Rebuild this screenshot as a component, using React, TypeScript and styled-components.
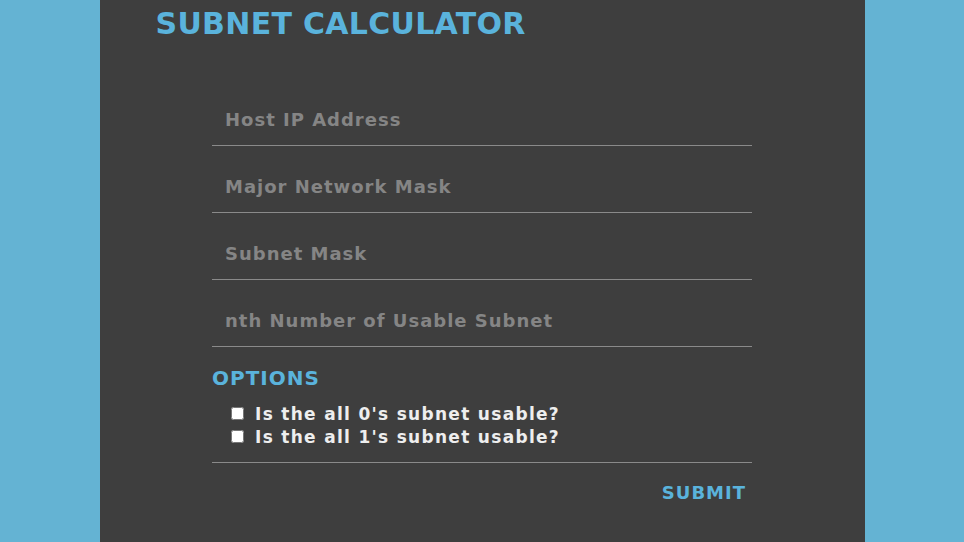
import React from 'react';
import styled, { createGlobalStyle } from 'styled-components';

const GlobalStyle = createGlobalStyle`
  html, body {
    margin: 0;
    padding: 0;
    height: 100%;
    background: #64b3d3;
  }
  #root {
    height: 100%;
  }
`;

const Page = styled.div`
  display: flex;
  justify-content: center;
  height: 100%;
  font-family: 'DejaVu Sans', 'Liberation Sans', sans-serif;
`;

const Panel = styled.main`
  width: 765px;
  height: 100%;
  background: #3e3e3e;
  box-sizing: border-box;
  padding: 4px 56px 0;
`;

const Title = styled.h1`
  margin: 0;
  font-size: 30px;
  line-height: 40px;
  font-weight: 700;
  letter-spacing: 0.3px;
  color: #5ab3dc;
`;

const Form = styled.form`
  width: 540px;
  margin: 36px auto 0;
  display: flex;
  flex-direction: column;
`;

const Field = styled.input`
  height: 66px;
  padding: 19px 13px 5px;
  box-sizing: border-box;
  border: none;
  border-bottom: 1.5px solid #8a8a8a;
  background: transparent;
  outline: none;
  font-family: inherit;
  font-size: 18px;
  font-weight: 700;
  letter-spacing: 1px;
  color: #ddd;
  &::placeholder {
    color: #858585;
  }
  & + & {
    height: 67px;
  }
`;

const Section = styled.fieldset`
  border: none;
  border-bottom: 1.5px solid #8a8a8a;
  margin: 0;
  padding: 20px 0 14px;
`;

const Legend = styled.h2`
  margin: 0 0 13px;
  font-size: 20px;
  line-height: 22px;
  font-weight: 700;
  letter-spacing: 1px;
  color: #5ab3dc;
`;

const Option = styled.label`
  display: flex;
  align-items: center;
  gap: 11px;
  padding-left: 19px;
  height: 23px;
  font-size: 17px;
  font-weight: 700;
  letter-spacing: 1.3px;
  color: #eeeeee;
`;

const Check = styled.input`
  width: 13px;
  height: 13px;
  margin: 0;
`;

const Actions = styled.div`
  display: flex;
  justify-content: flex-end;
  padding: 19px 6px 0 0;
`;

const Submit = styled.button`
  border: none;
  background: none;
  padding: 0;
  font-family: inherit;
  font-size: 18px;
  font-weight: 700;
  letter-spacing: 1px;
  color: #5ab3dc;
  cursor: pointer;
`;

const fields = [
  'Host IP Address',
  'Major Network Mask',
  'Subnet Mask',
  'nth Number of Usable Subnet',
];

const options = [
  "Is the all 0's subnet usable?",
  "Is the all 1's subnet usable?",
];

export default function App() {
  return (
    <Page>
      <GlobalStyle />
      <Panel>
        <Title>SUBNET CALCULATOR</Title>
        <Form onSubmit={e => e.preventDefault()}>
          {fields.map(f => (
            <Field key={f} type="text" placeholder={f} />
          ))}
          <Section>
            <Legend>OPTIONS</Legend>
            {options.map(o => (
              <Option key={o}>
                <Check type="checkbox" />
                {o}
              </Option>
            ))}
          </Section>
          <Actions>
            <Submit type="submit">SUBMIT</Submit>
          </Actions>
        </Form>
      </Panel>
    </Page>
  );
}
